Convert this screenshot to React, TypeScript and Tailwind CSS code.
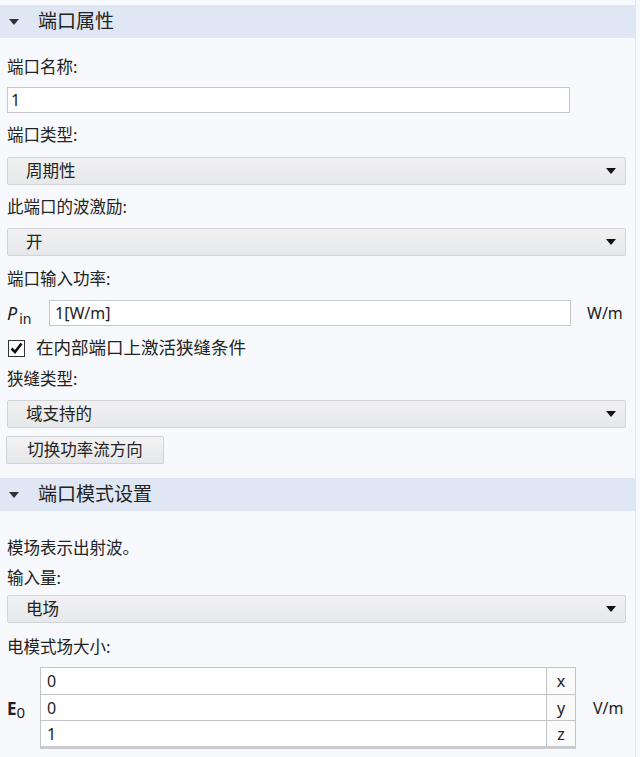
import React from "react";

const font = { fontFamily: '"Noto Sans", "Noto Sans CJK SC", sans-serif' };

function Header({ title }: { title: string }) {
  return (
    <div className="flex items-center h-[33px] bg-[#dee7f3]">
      <svg width="12" height="8" viewBox="0 0 12 8" className="ml-[8px]">
        <path d="M1 1 L11 1 L6 7 Z" fill="#333" />
      </svg>
      <span className="ml-[18px] text-[19px] text-[#222] leading-none">{title}</span>
    </div>
  );
}

function Label({ children, className = "" }: { children: React.ReactNode; className?: string }) {
  return <div className={"h-[22px] flex items-center text-[16.5px] text-[#222] leading-none " + className}>{children}</div>;
}

function Select({ value, className = "" }: { value: string; className?: string }) {
  return (
    <div className={"h-[28px] w-[619px] flex items-center border border-[#d2d4d8] rounded-[2px] bg-gradient-to-b from-[#f1f1f2] to-[#e7e8ea] " + className}>
      <span className="ml-[18px] text-[16.5px] text-[#222] leading-none">{value}</span>
      <svg width="12" height="8" viewBox="0 0 12 8" className="ml-auto mr-[8px]">
        <path d="M1 1 L11 1 L6 7 Z" fill="#111" />
      </svg>
    </div>
  );
}

export default function App() {
  return (
    <div className="w-[640px] h-[757px] bg-[#f7f9fc] overflow-hidden" style={font}>
      <div className="w-[636px] h-full border-r border-[#e3e5e9] pt-[5px]">
        <Header title="端口属性" />
        <div className="pl-[7px]">
          <Label className="mt-[18px]">端口名称:</Label>
          <div className="mt-[9px] h-[26px] w-[563px] bg-white border border-[#c5c7cb] flex items-center">
            <span className="ml-[3px] text-[16px] text-[#222] leading-none">1</span>
          </div>
          <Label className="mt-[11px]">端口类型:</Label>
          <Select value="周期性" className="mt-[11px]" />
          <Label className="mt-[11px]">此端口的波激励:</Label>
          <Select value="开" className="mt-[10px]" />
          <Label className="mt-[12px]">端口输入功率:</Label>
          <div className="mt-[10px] h-[26px] flex items-center">
            <span className="w-[42px] text-[18px] text-[#222] leading-none">
              <i>P</i>
              <span className="text-[14px] ml-[2px] relative top-[4px]">in</span>
            </span>
            <div className="h-[26px] w-[522px] bg-white border border-[#c5c7cb] flex items-center">
              <span className="ml-[5px] text-[16px] text-[#222] leading-none">1[W/m]</span>
            </div>
            <span className="ml-[16px] text-[16px] text-[#222] leading-none">W/m</span>
          </div>
          <div className="mt-[11px] h-[22px] flex items-center">
            <div className="w-[17px] h-[17px] border border-[#333] bg-white flex items-center justify-center ml-[1px]">
              <svg width="13" height="12" viewBox="0 0 13 12">
                <path d="M1.5 6.5 L5 10 L11.5 1.5" stroke="#111" strokeWidth="2.6" fill="none" />
              </svg>
            </div>
            <span className="ml-[11px] text-[17.5px] text-[#222] leading-none">在内部端口上激活狭缝条件</span>
          </div>
          <Label className="mt-[9px]">狭缝类型:</Label>
          <Select value="域支持的" className="mt-[10px]" />
          <div className="mt-[8px] h-[28px] w-[158px] -ml-[1px] flex items-center justify-center border border-[#cfd1d5] rounded-[2px] bg-gradient-to-b from-[#f3f3f4] to-[#e6e7e9]">
            <span className="text-[16.5px] text-[#222] leading-none">切换功率流方向</span>
          </div>
        </div>
        <div className="mt-[14px]">
          <Header title="端口模式设置" />
        </div>
        <div className="pl-[7px]">
          <Label className="mt-[26px]">模场表示出射波。</Label>
          <Label className="mt-[8px]">输入量:</Label>
          <Select value="电场" className="mt-[6px]" />
          <Label className="mt-[13px]">电模式场大小:</Label>
          <div className="mt-[9px] flex items-center">
            <span className="w-[33px] text-[17px] text-[#222] leading-none">
              <b>E</b>
              <span className="text-[15px] relative top-[3px]">0</span>
            </span>
            <div className="w-[536px] border border-[#c2c4c8] border-b-[3px] border-b-[#c9cbcf] bg-white">
              {[
                ["0", "x"],
                ["0", "y"],
                ["1", "z"],
              ].map(([v, c], i) => (
                <div key={c} className={"flex h-[26px] " + (i > 0 ? "border-t border-[#c2c4c8]" : "")}>
                  <div className="flex-1 flex items-center pl-[6px] text-[16px] text-[#222] leading-none">{v}</div>
                  <div className="w-[29px] border-l border-[#c2c4c8] flex items-center justify-center text-[16px] text-[#222] leading-none bg-[#fafafa]">
                    {c}
                  </div>
                </div>
              ))}
            </div>
            <span className="ml-[17px] text-[16px] text-[#222] leading-none">V/m</span>
          </div>
        </div>
      </div>
    </div>
  );
}
